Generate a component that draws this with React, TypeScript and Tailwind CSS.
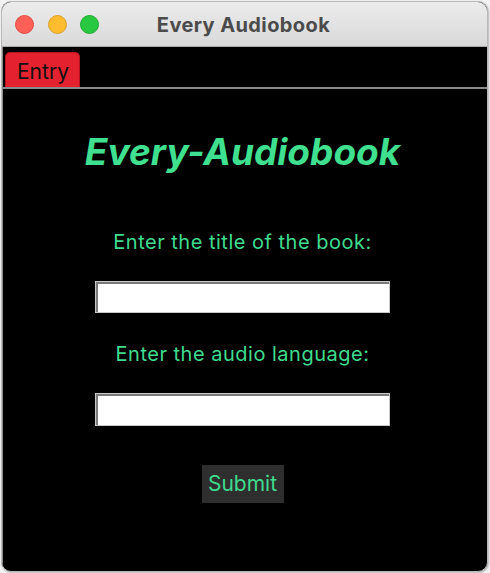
import React from "react";

export default function App() {
  return (
    <div className="w-[490px] h-[573px] bg-[#f2f2f2] pt-[1px] pl-[1px]" style={{ fontFamily: "Inter, 'Liberation Sans', sans-serif" }}>
      <div className="w-[487px] h-[571px] rounded-[10px] border border-[#b9b9b9] overflow-hidden flex flex-col bg-black shadow-[1px_1px_2px_rgba(0,0,0,0.25)]">
        {/* Title bar */}
        <div className="relative h-[45px] shrink-0 bg-gradient-to-b from-[#ececec] to-[#d9d9d9] border-b border-[#a9a9a9] flex items-center">
          <div className="flex items-center gap-[13.5px] pl-[13px] pt-[1px]">
            <span className="w-[19px] h-[19px] rounded-full bg-[#fe5f57] border border-[#e24b43]" />
            <span className="w-[19px] h-[19px] rounded-full bg-[#febc2e] border border-[#dea028]" />
            <span className="w-[19px] h-[19px] rounded-full bg-[#28c840] border border-[#1fab31]" />
          </div>
          <div className="absolute inset-0 flex items-center justify-center pr-[2px] pt-[1px] text-[20px] tracking-[0.4px] font-bold text-[#4b4b4b]">
            Every Audiobook
          </div>
        </div>
        {/* Content */}
        <div className="flex-1 flex flex-col border-l border-[#8f8f8f]">
          <div className="h-[42px] shrink-0 flex items-end pl-[2px] border-b-2 border-[#8a8a8a]">
            <div className="w-[75px] h-[35px] rounded-t-[5px] bg-[#e4222f] border border-b-0 border-[#b8141f] flex items-center pl-[11px] pt-[4px] text-[21px] text-[#111]">
              Entry
            </div>
          </div>
          <div className="flex flex-col items-center pr-[5px]">
            <div className="mt-[41px] h-[44px] leading-[44px] text-[37px] font-bold italic text-[#3fe08f]">
              Every-Audiobook
            </div>
            <div className="mt-[56px] h-[24px] leading-[24px] text-[20px] tracking-[0.5px] text-[#3fdc8e]">
              Enter the title of the book:
            </div>
            <div className="mt-[27px] w-[295px] h-[32px] bg-white border border-[#c8c8c8]">
              <div className="w-full h-full border-t-2 border-l-2 border-t-[#7a7a7a] border-l-[#7a7a7a]" />
            </div>
            <div className="mt-[29px] h-[24px] leading-[24px] text-[20px] tracking-[0.5px] text-[#3fdc8e]">
              Enter the audio language:
            </div>
            <div className="mt-[27px] w-[295px] h-[33px] bg-white border border-[#c8c8c8]">
              <div className="w-full h-full border-t-2 border-l-2 border-t-[#7a7a7a] border-l-[#7a7a7a]" />
            </div>
            <div className="mt-[39px] w-[82px] h-[38px] bg-[#2e2e2e] flex items-center justify-center text-[21px] text-[#3fdc8e]">
              Submit
            </div>
          </div>
        </div>
      </div>
    </div>
  );
}
